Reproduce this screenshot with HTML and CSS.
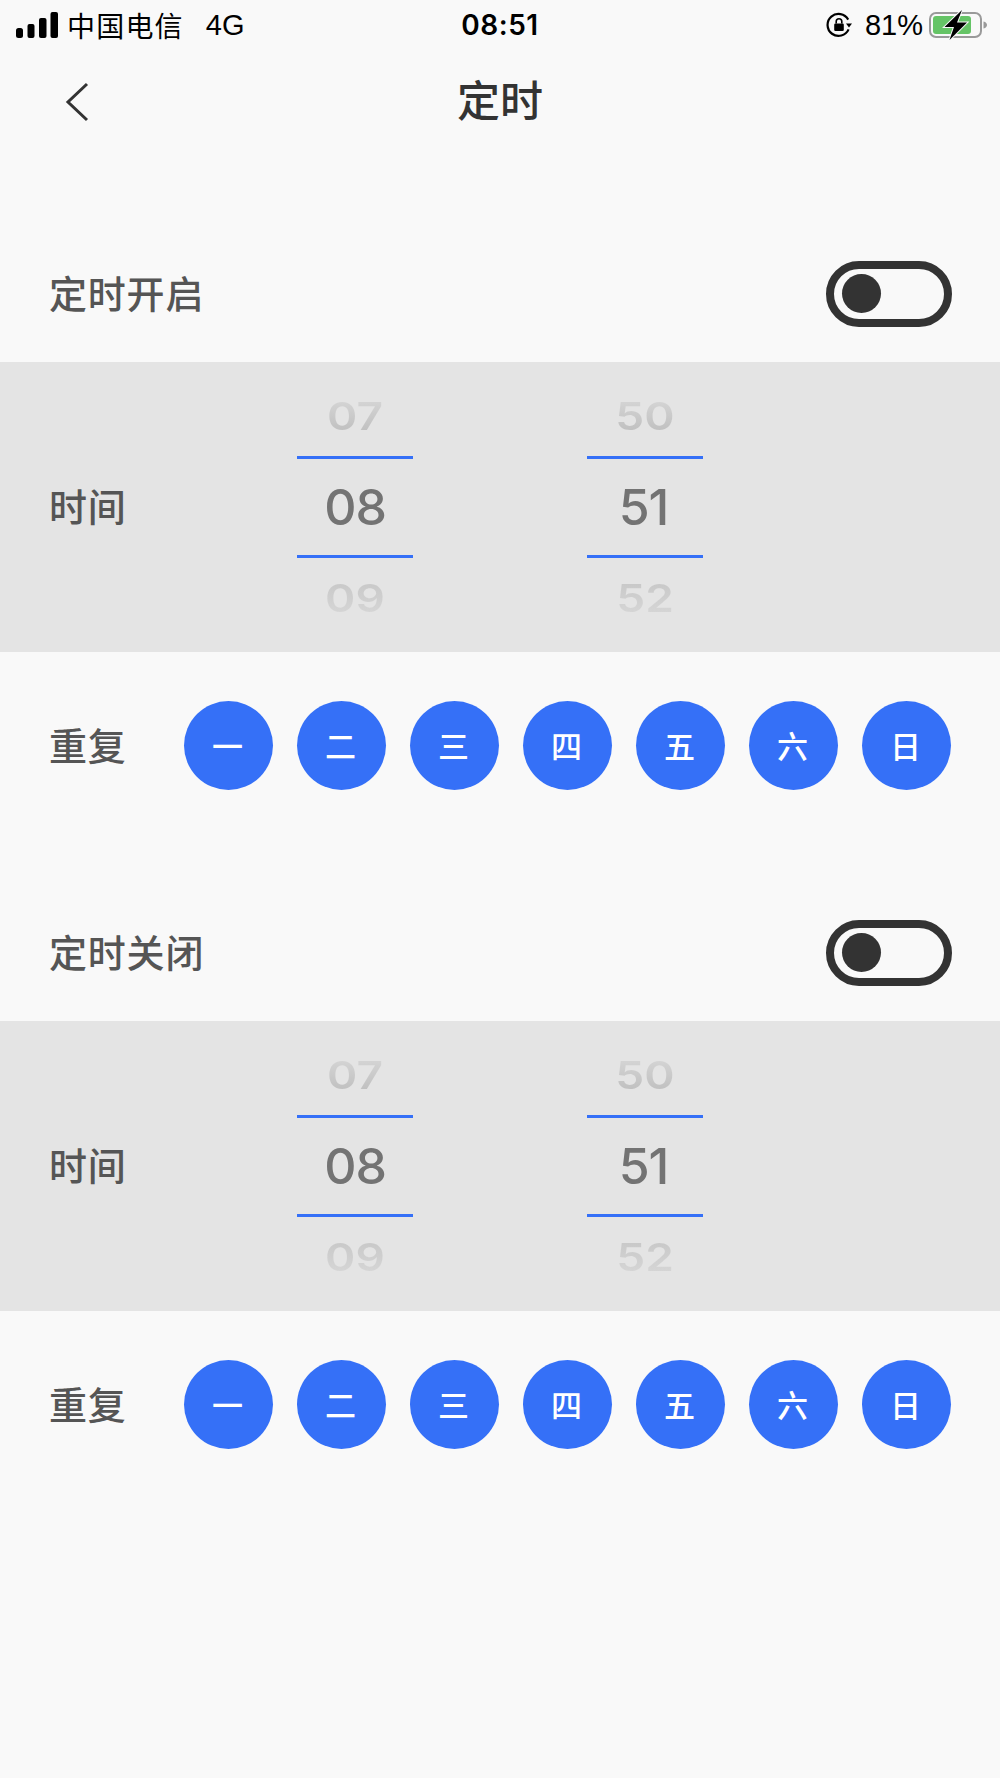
FILE: index.html
```html
<!DOCTYPE html>
<html lang="zh-CN">
<head>
  <meta charset="UTF-8">
  <meta name="viewport" content="width=device-width, initial-scale=1.0">
  <title>定时</title>
  <link rel="stylesheet" href="styles.css">
</head>
<body>
  <div class="status-bar">
    <div class="status-left">
      <svg class="signal" width="42" height="27" viewBox="0 0 42 27">
        <rect x="0" y="16" width="7" height="10" rx="2.5" />
        <rect x="11.5" y="12" width="7" height="14" rx="2" />
        <rect x="23" y="6" width="7.5" height="20" rx="2" />
        <rect x="34.5" y="0" width="7.5" height="26" rx="2" />
      </svg>
      <span class="carrier">中国电信</span>
      <span class="network">4G</span>
    </div>
    <div class="status-time">08:51</div>
    <div class="status-right">
      <svg class="lock" width="26" height="26" viewBox="0 0 26 26">
        <path d="M22.6 17.4A11 11 0 1 1 22.2 7.6" fill="none" stroke="#000" stroke-width="2.2" />
        <path d="M20 11.5h6l-3 4z" fill="#000" />
        <rect x="8.2" y="11.5" width="9.6" height="7.5" rx="1.2" fill="#000" />
        <path d="M10.2 11.5V9.6a2.8 2.8 0 0 1 5.6 0v1.9" fill="none" stroke="#000" stroke-width="1.6" />
      </svg>
      <span class="battery-pct">81%</span>
      <svg class="battery" width="60" height="30" viewBox="0 0 60 30">
        <rect x="1" y="3" width="51" height="24" rx="6" fill="none" stroke="#9a9a9a" stroke-width="2" />
        <rect x="4" y="6" width="38" height="18" rx="3" fill="#65c466" />
        <path d="M54.5 11.5c2.5.6 3.5 2 3.5 3.5s-1 2.900-3.500 3.500z" fill="#9a9a9a" />
        <path d="M33 0 15.500 17h9.500L20.500 30 38 12.500h-10z" fill="#000" stroke="#f9f9f9" stroke-width="2" paint-order="stroke" />
      </svg>
    </div>
  </div>

  <div class="nav-bar">
    <svg class="back" width="24" height="40" viewBox="0 0 24 40">
      <path d="M22 2 3 20l19 18" fill="none" stroke="#333" stroke-width="3" />
    </svg>
    <h1 class="nav-title">定时</h1>
  </div>

  <section class="timer">
    <div class="timer-head">
      <span class="label">定时开启</span>
      <div class="toggle"><div class="knob"></div></div>
    </div>
    <div class="time-band">
      <span class="label">时间</span>
      <div class="wheel wheel-hour">
        <div class="cell cell-top"><span class="faded">07</span></div>
        <div class="cell cell-mid">08</div>
        <div class="cell cell-bottom"><span class="faded">09</span></div>
      </div>
      <div class="wheel wheel-min">
        <div class="cell cell-top"><span class="faded">50</span></div>
        <div class="cell cell-mid">51</div>
        <div class="cell cell-bottom"><span class="faded">52</span></div>
      </div>
    </div>
    <div class="repeat">
      <span class="label">重复</span>
      <div class="days">
        <div class="day">一</div>
        <div class="day">二</div>
        <div class="day">三</div>
        <div class="day">四</div>
        <div class="day">五</div>
        <div class="day">六</div>
        <div class="day">日</div>
      </div>
    </div>
  </section>

  <section class="timer">
    <div class="timer-head">
      <span class="label">定时关闭</span>
      <div class="toggle"><div class="knob"></div></div>
    </div>
    <div class="time-band">
      <span class="label">时间</span>
      <div class="wheel wheel-hour">
        <div class="cell cell-top"><span class="faded">07</span></div>
        <div class="cell cell-mid">08</div>
        <div class="cell cell-bottom"><span class="faded">09</span></div>
      </div>
      <div class="wheel wheel-min">
        <div class="cell cell-top"><span class="faded">50</span></div>
        <div class="cell cell-mid">51</div>
        <div class="cell cell-bottom"><span class="faded">52</span></div>
      </div>
    </div>
    <div class="repeat">
      <span class="label">重复</span>
      <div class="days">
        <div class="day">一</div>
        <div class="day">二</div>
        <div class="day">三</div>
        <div class="day">四</div>
        <div class="day">五</div>
        <div class="day">六</div>
        <div class="day">日</div>
      </div>
    </div>
  </section>
</body>
</html>
```

FILE: styles.css
```css
html, body {
  margin: 0;
  padding: 0;
}
body {
  height: 1778px;
  overflow: hidden;
  background-color: #f9f9f9;
  font-family: "Liberation Sans", "Noto Sans CJK SC", sans-serif;
  color: #000;
}

/* status bar */
.status-bar {
  height: 50px;
  padding: 0 11px 0 16px;
  display: grid;
  grid-template-columns: 1fr auto 1fr;
  align-items: center;
  font-size: 28px;
}
.status-left, .status-right {
  display: flex;
  align-items: center;
}
.status-right {
  justify-content: flex-end;
}
.signal {
  fill: #000;
  margin-right: 9px;
}
.carrier {
  font-size: 28px;
  letter-spacing: 1.2px;
}
.network {
  margin-left: 22px;
  font-size: 29px;
}
.status-time {
  font-family: Inter, "Liberation Sans", sans-serif;
  font-weight: 600;
  font-size: 28px;
  letter-spacing: 0.5px;
  margin-right: 5px;
}
.lock {
  margin-right: 13px;
}
.battery-pct {
  font-size: 29px;
  margin-right: 6px;
}

/* nav */
.nav-bar {
  height: 104px;
  margin-bottom: 107px;
  position: relative;
  display: flex;
  align-items: center;
  justify-content: center;
}
.back {
  position: absolute;
  left: 65px;
  top: 32px;
}
.nav-title {
  margin: 0 0 8px 0;
  font-size: 43px;
  font-weight: 500;
  color: #333;
}

/* sections */
.timer {
  margin-bottom: 130px;
}
.label {
  font-size: 38px;
  font-weight: 500;
  color: #555;
  line-height: 50px;
  letter-spacing: 0.8px;
  padding-top: 2px;
}
.timer-head {
  height: 66px;
  padding: 0 48px 35px 49px;
  display: flex;
  justify-content: space-between;
  align-items: center;
}
.toggle {
  width: 126px;
  height: 66px;
  box-sizing: border-box;
  border: 8px solid #333;
  border-radius: 33px;
  padding: 5px 8px;
  background: #f9f9f9;
}
.knob {
  width: 39px;
  height: 39px;
  border-radius: 50%;
  background: #333;
}

/* time wheel */
.time-band {
  height: 290px;
  background-color: #e4e4e4;
  padding-left: 49px;
  display: flex;
  align-items: center;
}
.time-band .label {
  width: 248px;
}
.wheel {
  width: 116px;
  text-align: center;
}
.wheel-min {
  margin-left: 174px;
}
.cell {
  display: flex;
  align-items: center;
  justify-content: center;
  box-sizing: border-box;
  font-family: Inter, "Liberation Sans", sans-serif;
}
.cell-top {
  height: 94px;
  padding-top: 14px;
}
.cell-bottom {
  height: 94px;
  padding-bottom: 14px;
}
.cell-mid {
  height: 102px;
  border-top: 3px solid #3570f7;
  border-bottom: 3px solid #3570f7;
  font-size: 50px;
  font-weight: 500;
  letter-spacing: -1px;
  color: #737373;
}
.wheel-min .cell-mid {
  padding-right: 3px;
}
.faded {
  display: block;
  font-size: 46px;
  line-height: 50px;
  font-weight: 600;
  transform: scaleY(0.84);
  color: transparent;
  -webkit-background-clip: text;
  background-clip: text;
}
.cell-top .faded {
  background-image: linear-gradient(#d8d8d8, #bcbcbc);
}
.cell-bottom .faded {
  background-image: linear-gradient(#c6c6c6, #d8d8d8);
}

/* repeat days */
.repeat {
  padding: 49px 49px 0 49px;
  display: flex;
  justify-content: space-between;
  align-items: center;
}
.days {
  display: flex;
  gap: 24px;
}
.day {
  width: 89px;
  height: 89px;
  padding: 0 2px 3px 0;
  box-sizing: border-box;
  border-radius: 50%;
  background-color: #3570f7;
  color: #fff;
  font-size: 31px;
  font-weight: 500;
  display: flex;
  align-items: center;
  justify-content: center;
}
```
